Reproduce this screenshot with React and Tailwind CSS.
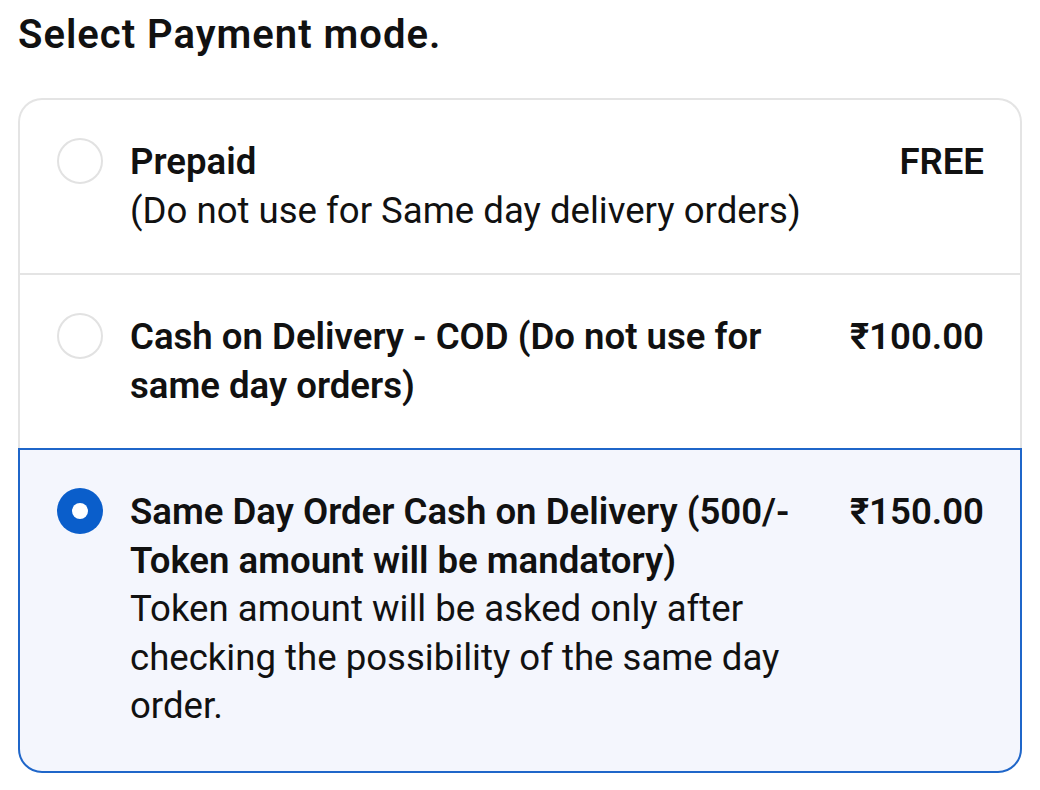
import { useState } from 'react';

const OPTIONS = [
  {
    id: 'prepaid',
    title: 'Prepaid',
    note: '(Do not use for Same day delivery orders)',
    price: 'FREE',
  },
  {
    id: 'cod',
    title: 'Cash on Delivery - COD (Do not use for same day orders)',
    price: '₹100.00',
  },
  {
    id: 'sameday',
    title: 'Same Day Order Cash on Delivery (500/- Token amount will be mandatory)',
    note: 'Token amount will be asked only after checking the possibility of the same day order.',
    price: '₹150.00',
  },
];

function Radio({ checked }) {
  if (checked) {
    return (
      <span className="shrink-0 -mt-[1px] w-[46px] h-[46px] rounded-full bg-[#0a5ecb] flex items-center justify-center">
        <span className="w-[16px] h-[16px] rounded-full bg-white" />
      </span>
    );
  }
  return <span className="shrink-0 -mt-[1px] w-[46px] h-[46px] rounded-full border-2 border-[#e2e2e2] bg-white" />;
}

export default function App() {
  const [selected, setSelected] = useState('sameday');

  return (
    <div className="w-[1040px] min-h-[790px] bg-white px-[18px] pt-[10px] text-[#111]" style={{ fontFamily: 'Roboto, "Noto Sans", sans-serif' }}>
      <h2 className="text-[40px] leading-[50px] font-semibold tracking-[1px]">Select Payment mode.</h2>

      <div className="mt-[38px] flex flex-col">
        {OPTIONS.map((opt, i) => {
          const isSel = selected === opt.id;
          const first = i === 0;
          const last = i === OPTIONS.length - 1;
          // each row draws its own top border, which doubles as the divider
          let box = 'border-x-2 border-t-2 border-[#e4e4e4] bg-white';
          if (isSel) box = 'border-2 border-[#1f66c9] bg-[#f4f6fd]';
          else if (last) box += ' border-b-2';
          if (first) box += ' rounded-t-[24px]';
          if (last) box += ' rounded-b-[24px] pb-[40px]';
          else box += ' pb-[38px]';
          return (
            <div
              key={opt.id}
              onClick={() => setSelected(opt.id)}
              className={`flex items-start pl-[37px] pr-[36px] pt-[39px] cursor-pointer ${box}`}
            >
              <Radio checked={isSel} />
              <div className="flex-1 ml-[27px] text-[36.6px] leading-[48.5px] -mt-[1px]">
                <div className="font-semibold">{opt.title}</div>
                {opt.note && <div className="font-normal">{opt.note}</div>}
              </div>
              <div className="shrink-0 ml-[40px] text-[36.6px] leading-[48.5px] font-semibold -mt-[1px]">{opt.price}</div>
            </div>
          );
        })}
      </div>
    </div>
  );
}
